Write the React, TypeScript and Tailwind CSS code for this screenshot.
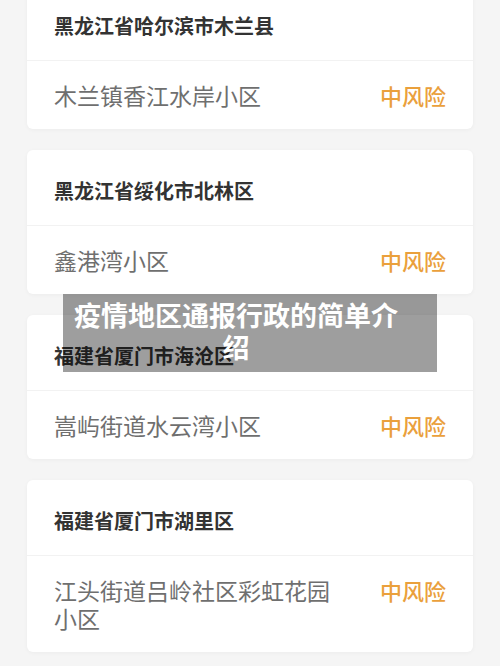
const areas = [
  { region: '黑龙江省哈尔滨市木兰县', place: '木兰镇香江水岸小区', level: '中风险' },
  { region: '黑龙江省绥化市北林区', place: '鑫港湾小区', level: '中风险' },
  { region: '福建省厦门市海沧区', place: '嵩屿街道水云湾小区', level: '中风险' },
  { region: '福建省厦门市湖里区', place: '江头街道吕岭社区彩虹花园小区', level: '中风险' },
];

const font = { fontFamily: '"Noto Sans CJK SC", "Noto Sans", sans-serif' };

export default function App() {
  return (
    <div className="relative w-[500px] h-[666px] overflow-hidden bg-[#f5f5f5]" style={font}>
      <div className="flex flex-col gap-[21px] px-[27px] -mt-[15px]">
        {areas.map(a => (
          <div key={a.region} className="bg-white rounded-[6px] shadow-[0_1px_4px_rgba(0,0,0,0.04)]">
            <div className="h-[75px] pt-[29px] px-[27px]">
              <p className="text-[20px] leading-[24px] font-bold text-[#333]">{a.region}</p>
            </div>
            <div className="flex items-start justify-between gap-[40px] border-t border-[#f2f2f2] px-[27px] py-[20px]">
              <p className="flex-1 text-[23px] leading-[28px] text-[#6f6f6f]">{a.place}</p>
              <span className="text-[22px] leading-[28px] font-medium text-[#eaa03c]">{a.level}</span>
            </div>
          </div>
        ))}
      </div>

      {/* title overlay */}
      <div className="absolute left-[63px] top-[294px] w-[374px] h-[78px] bg-black/[0.38] pl-[8px] pr-[36px] pt-[5px]">
        <p className="text-center text-[27px] leading-[32px] font-bold text-white">
          疫情地区通报行政的简单介绍
        </p>
      </div>
    </div>
  );
}
